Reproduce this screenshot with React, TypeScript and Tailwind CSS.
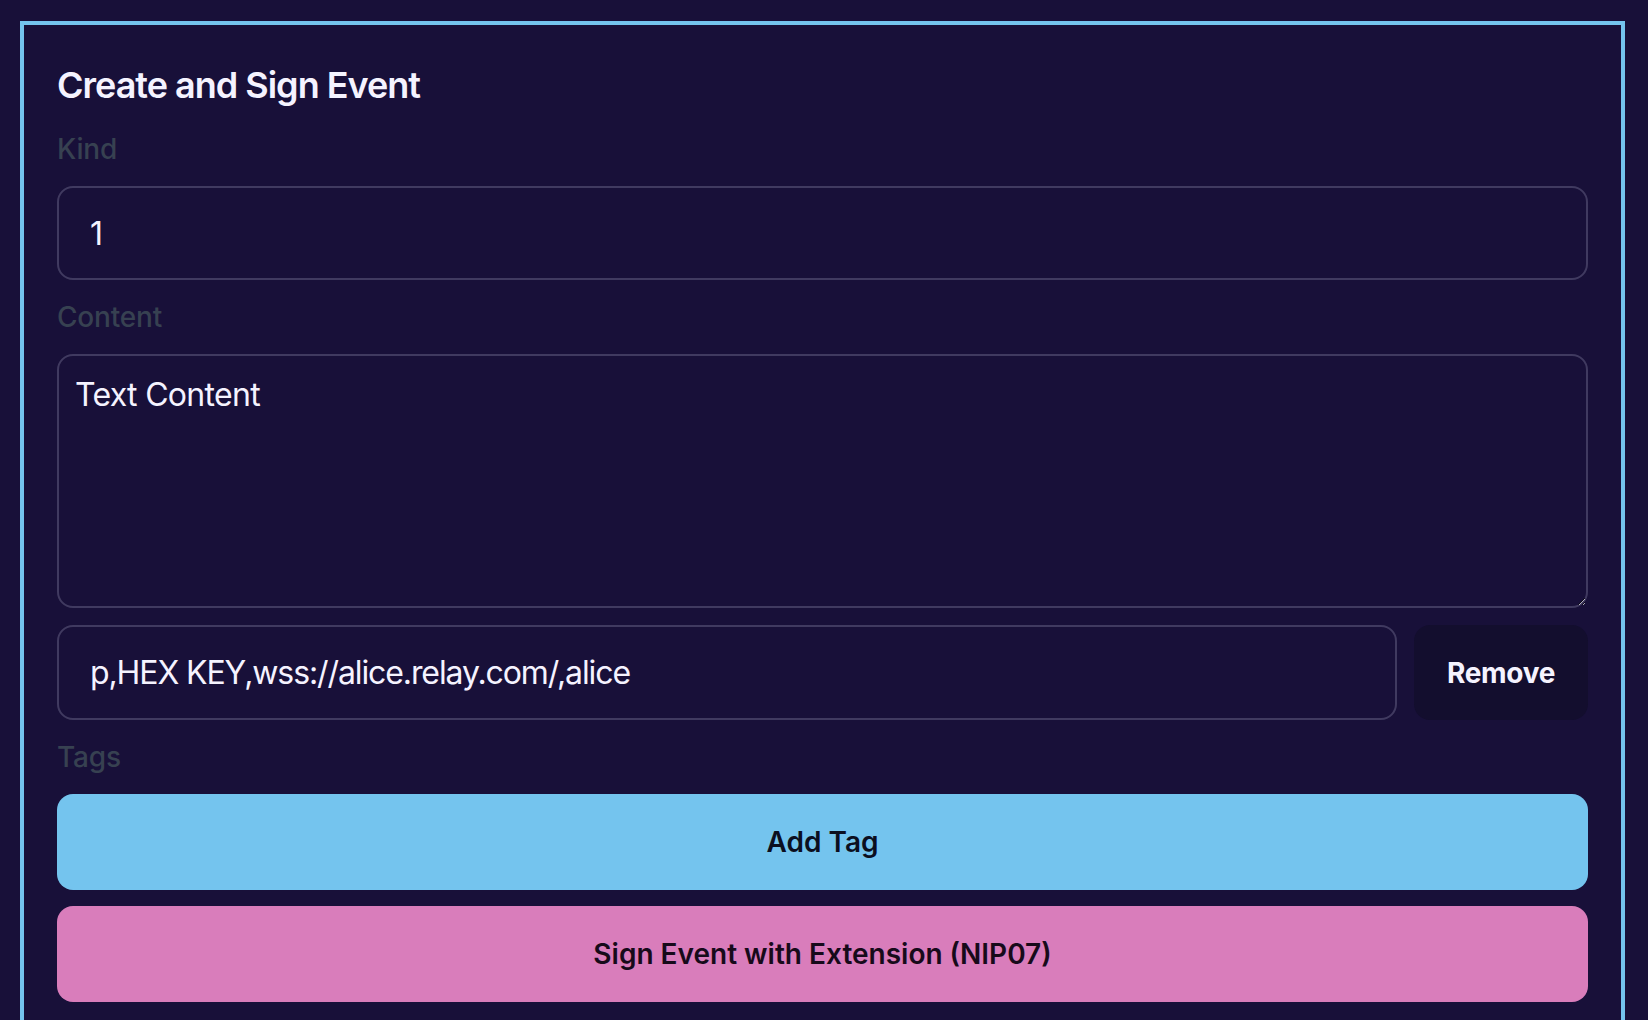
export default function App() {
  return (
    <div className="min-h-screen bg-[#181039] pt-[21px] pl-[20px] pr-[23px] font-['Inter','Liberation_Sans',sans-serif]">
      <div className="border-4 border-[#74c4ee] p-[33px] pb-[40px]">
        <div className="flex flex-col gap-[17px]">
          <h1 className="text-[36px] leading-[54px] font-semibold tracking-[-1px] text-[#f5f3ff]">
            Create and Sign Event
          </h1>
          <label className="text-[28px] leading-[40px] font-medium tracking-[-0.2px] text-[#374151]">Kind</label>
          <input
            type="text"
            defaultValue="1"
            className="h-[94px] w-full rounded-[16px] border-2 border-[#403a60] bg-transparent px-[31px] text-[32px] tracking-[-1.1px] text-[#f5f3ff] outline-none"
          />
          <label className="text-[28px] leading-[40px] font-medium tracking-[-0.2px] text-[#374151]">Content</label>
          <textarea
            defaultValue="Text Content"
            className="h-[254px] w-full rounded-[16px] border-2 border-[#403a60] bg-transparent px-[16px] pt-[15px] text-[32px] leading-[48px] tracking-[-0.7px] text-[#f5f3ff] outline-none"
          />
          <div className="flex gap-[17px]">
            <input
              type="text"
              defaultValue="p,HEX KEY,wss://alice.relay.com/,alice"
              className="h-[95px] flex-1 rounded-[16px] border-2 border-[#403a60] bg-transparent px-[31px] text-[32px] tracking-[-1.1px] text-[#f5f3ff] outline-none"
            />
            <button className="h-[95px] w-[174px] rounded-[16px] bg-[#130e2e] text-[28px] font-bold tracking-[-0.3px] text-[#f5f3ff]">
              Remove
            </button>
          </div>
          <label className="text-[28px] leading-[40px] font-medium tracking-[-0.2px] text-[#374151]">Tags</label>
          <div className="flex flex-col gap-[16px]">
            <button className="h-[96px] w-full rounded-[16px] bg-[#74c4ee] text-[28px] font-semibold text-[#0b0f1f]">
              Add Tag
            </button>
            <button className="h-[96px] w-full rounded-[16px] bg-[#d97dbb] text-[28px] font-semibold text-[#170a1a]">
              Sign Event with Extension (NIP07)
            </button>
          </div>
        </div>
      </div>
    </div>
  );
}
